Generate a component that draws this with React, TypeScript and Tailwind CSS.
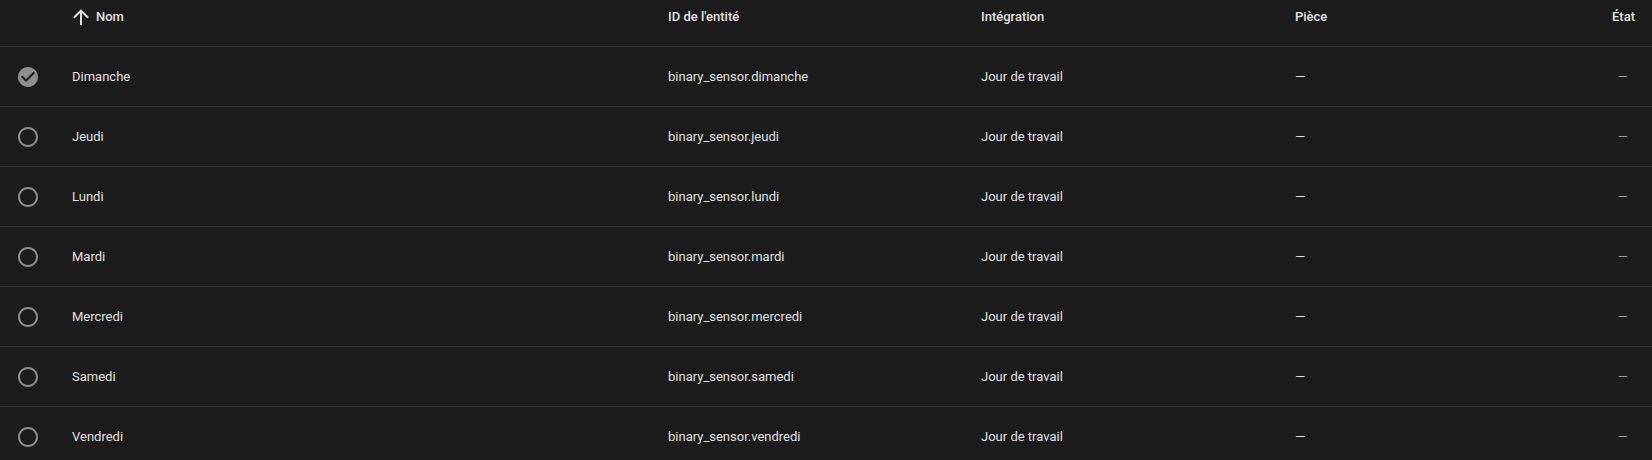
const days = ['Dimanche', 'Jeudi', 'Lundi', 'Mardi', 'Mercredi', 'Samedi', 'Vendredi'];

const cols = 'grid grid-cols-[56px_596px_313px_314px_1fr]';

function CircleIcon({ checked }: { checked: boolean }) {
  return (
    <svg width="24" height="24" viewBox="0 0 24 24" className="text-[#8f8f8f]">
      {checked ? (
        <path
          fill="currentColor"
          d="M12 2C6.5 2 2 6.5 2 12S6.5 22 12 22 22 17.5 22 12 17.5 2 12 2M10 17L5 12L6.41 10.59L10 14.17L17.59 6.58L19 8L10 17Z"
        />
      ) : (
        <path
          fill="currentColor"
          d="M12 20C7.58 20 4 16.42 4 12S7.58 4 12 4 20 7.58 20 12 16.42 20 12 20M12 2C6.48 2 2 6.48 2 12S6.48 22 12 22 22 17.52 22 12 17.52 2 12 2Z"
        />
      )}
    </svg>
  );
}

function SortArrow() {
  return (
    <svg width="24" height="24" viewBox="0 0 24 24" className="text-[#e1e1e1] -ml-[3px]">
      <path fill="currentColor" d="M13,20H11V8L5.5,13.5L4.08,12.08L12,4.16L19.92,12.08L18.5,13.5L13,8V20Z" />
    </svg>
  );
}

export default function App() {
  return (
    <div className="w-[1652px] h-[460px] overflow-hidden bg-[#1c1c1c] text-[#e1e1e1] font-['Roboto',sans-serif] text-[13px]">
      {/* Header */}
      <div className={`${cols} h-[47px] items-start pt-[5px] border-b border-[#313131] font-medium`}>
        <div />
        <div className="flex items-center gap-[3px] pl-4 h-[24px]">
          <SortArrow />
          <span>Nom</span>
        </div>
        <div className="pl-4 h-[24px] leading-[24px]">ID de l'entité</div>
        <div className="pl-4 h-[24px] leading-[24px]">Intégration</div>
        <div className="flex justify-between pl-4 pr-[17px] h-[24px] leading-[24px]">
          <span>Pièce</span>
          <span>État</span>
        </div>
      </div>

      {/* Rows */}
      {days.map((day, i) => (
        <div key={day} className={`${cols} h-[60px] items-center border-b border-[#313131]`}>
          <div className="flex justify-center">
            <CircleIcon checked={i === 0} />
          </div>
          <div className="pl-4">{day}</div>
          <div className="pl-4">binary_sensor.{day.toLowerCase()}</div>
          <div className="pl-4">Jour de travail</div>
          <div className="flex justify-between pl-4 pr-[24px]">
            <span>—</span>
            <span className="text-[#9a9a9a]">—</span>
          </div>
        </div>
      ))}
    </div>
  );
}
